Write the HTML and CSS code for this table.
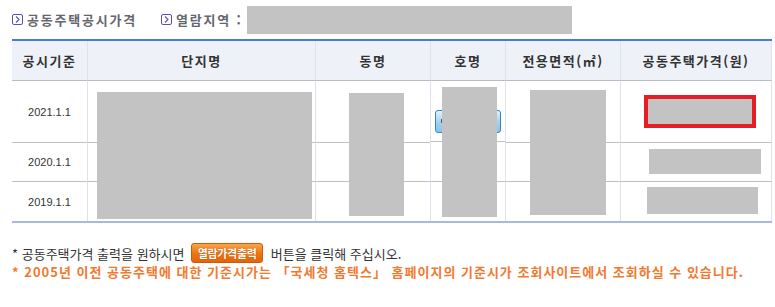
FILE: index.html
```html
<!DOCTYPE html>
<html lang="ko">
<head>
<meta charset="utf-8">
<title>공동주택공시가격</title>
<link rel="stylesheet" href="styles.css">
</head>
<body>
<div class="page">
  <div class="titlebar">
    <div class="ttl">
      <svg class="ico" width="11" height="11" viewBox="0 0 11 11"><rect x="0.5" y="0.5" width="10" height="10" rx="1.5" fill="none" stroke="#5b50b6" stroke-width="1"/><path d="M4 2.5 L7 5.5 L4 8.5" fill="none" stroke="#5b50b6" stroke-width="1.1"/></svg>
      <span>공동주택공시가격</span>
    </div>
    <div class="ttl region">
      <svg class="ico" width="11" height="11" viewBox="0 0 11 11"><rect x="0.5" y="0.5" width="10" height="10" rx="1.5" fill="none" stroke="#5b50b6" stroke-width="1"/><path d="M4 2.5 L7 5.5 L4 8.5" fill="none" stroke="#5b50b6" stroke-width="1.1"/></svg>
      <span>열람지역 :</span>
    </div>
    <div class="region-box"></div>
  </div>

  <div class="tblwrap">
    <div class="tbl">
      <div class="th">공시기준</div>
      <div class="th">단지명</div>
      <div class="th">동명</div>
      <div class="th">호명</div>
      <div class="th">전용면적(㎡)</div>
      <div class="th last">공동주택가격(원)</div>

      <div class="td r1 year">2021.1.1</div>
      <div class="td r1"></div>
      <div class="td r1"></div>
      <div class="td r1 btncell"><span class="bluebtn"><span class="bi"></span></span></div>
      <div class="td r1"></div>
      <div class="td r1 last"></div>

      <div class="td year">2020.1.1</div>
      <div class="td"></div>
      <div class="td"></div>
      <div class="td"></div>
      <div class="td"></div>
      <div class="td last"></div>

      <div class="td year nob">2019.1.1</div>
      <div class="td nob"></div>
      <div class="td nob"></div>
      <div class="td nob"></div>
      <div class="td nob"></div>
      <div class="td nob last"></div>
    </div>
    <div class="mask m-danji"></div>
    <div class="mask m-dong"></div>
    <div class="mask m-ho"></div>
    <div class="mask m-area"></div>
    <div class="mask m-price1"></div>
    <div class="mask m-price2"></div>
    <div class="mask m-price3"></div>
  </div>

  <div class="notes">
    <div class="note1">* 공동주택가격 출력을 원하시면 <span class="obtn">열람가격출력</span> 버튼을 클릭해 주십시오.</div>
    <div class="note2">* 2005년 이전 공동주택에 대한 기준시가는 「국세청 홈텍스」 홈페이지의 기준시가 조회사이트에서 조회하실 수 있습니다.</div>
  </div>
</div>
</body>
</html>
```

FILE: styles.css
```css
html, body {
  margin: 0;
  padding: 0;
  background: #ffffff;
}
body {
  font-family: "Noto Sans CJK KR", "Noto Sans", sans-serif;
  font-size: 12px;
  color: #333333;
}
.page {
  width: 775px;
  height: 307px;
  overflow: hidden;
}
.titlebar {
  display: flex;
  align-items: center;
  height: 39px;
  padding-left: 12px;
}
.ttl {
  display: flex;
  align-items: center;
  gap: 4px;
  font-size: 13px;
  font-weight: bold;
  color: #666670;
  letter-spacing: 1.8px;
  line-height: 14px;
}
.ttl.region {
  margin-left: 24px;
}
.region-box {
  width: 325px;
  height: 28px;
  background: #c3c3c3;
  margin-left: 4px;
  margin-top: 1px;
}
.tblwrap {
  position: relative;
  margin-left: 12px;
  width: 760px;
}
.tbl {
  display: grid;
  grid-template-columns: 75px 228px 115px 75px 115px 152px;
  border-top: 2px solid #4a7ad8;
  border-bottom: 2px solid #a9b9d9;
}
.th {
  height: 39px;
  background: #eef2f8;
  border-bottom: 1px solid #b9bcc2;
  border-left: 1px solid #dde3ec;
  display: flex;
  align-items: center;
  justify-content: center;
  font-size: 13px;
  font-weight: bold;
  letter-spacing: 1.5px;
  color: #333333;
}
.th:first-child {
  border-left: none;
}
.td {
  height: 38px;
  border-bottom: 1px solid #c0c0c0;
  border-left: 1px solid #dde3ec;
  display: flex;
  align-items: center;
  justify-content: center;
}
.td.r1 {
  height: 61px;
}
.td.nob {
  border-bottom: none;
  height: 39px;
}
.td.year {
  border-left: none;
  font-family: "Liberation Sans", Arial, sans-serif;
  font-size: 11px;
  color: #333333;
}
.last {
  border-right: 1px solid #dde3ec;
}
.btncell {
  align-items: flex-start;
  padding-top: 29px;
  box-sizing: border-box;
}
.bluebtn {
  display: block;
  width: 64px;
  height: 21px;
  border: 1px solid #3a86b8;
  border-radius: 3px;
  background: linear-gradient(#e2f2fc, #9ed2f0 55%, #86c4ea);
  position: relative;
}
.bi {
  position: absolute;
  left: 5px;
  top: 8px;
  width: 4px;
  height: 4px;
  background: #555;
}
.mask {
  position: absolute;
  background: #c3c3c3;
}
.m-danji { left: 85px; top: 53px; width: 215px; height: 127px; }
.m-dong { left: 337px; top: 54px; width: 55px; height: 123px; }
.m-ho { left: 430px; top: 48px; width: 55px; height: 130px; }
.m-area { left: 518px; top: 51px; width: 76px; height: 125px; }
.m-price1 { left: 632px; top: 56px; width: 104px; height: 25px; border: 4px solid #e51e25; }
.m-price2 { left: 637px; top: 110px; width: 112px; height: 25px; }
.m-price3 { left: 635px; top: 148px; width: 111px; height: 27px; }
.notes {
  padding-left: 12px;
  margin-top: 20px;
}
.note1 {
  display: flex;
  align-items: center;
  height: 20px;
  white-space: pre;
  font-size: 13px;
  color: #333333;
}
.obtn {
  display: inline-flex;
  align-items: center;
  justify-content: center;
  width: 70px;
  height: 18px;
  margin: 0 4px 0 3px;
  border: 1px solid #c95a08;
  border-radius: 3px;
  background: linear-gradient(#f9a64a, #ee7612 50%, #e2650a);
  color: #ffffff;
  font-size: 11px;
  font-weight: bold;
  letter-spacing: -0.3px;
  text-shadow: 0 0 1px #9a3c00;
}
.note2 {
  margin-top: 1px;
  height: 16px;
  line-height: 16px;
  font-size: 13px;
  font-weight: bold;
  color: #f27a30;
  letter-spacing: 1px;
  white-space: nowrap;
}
```
